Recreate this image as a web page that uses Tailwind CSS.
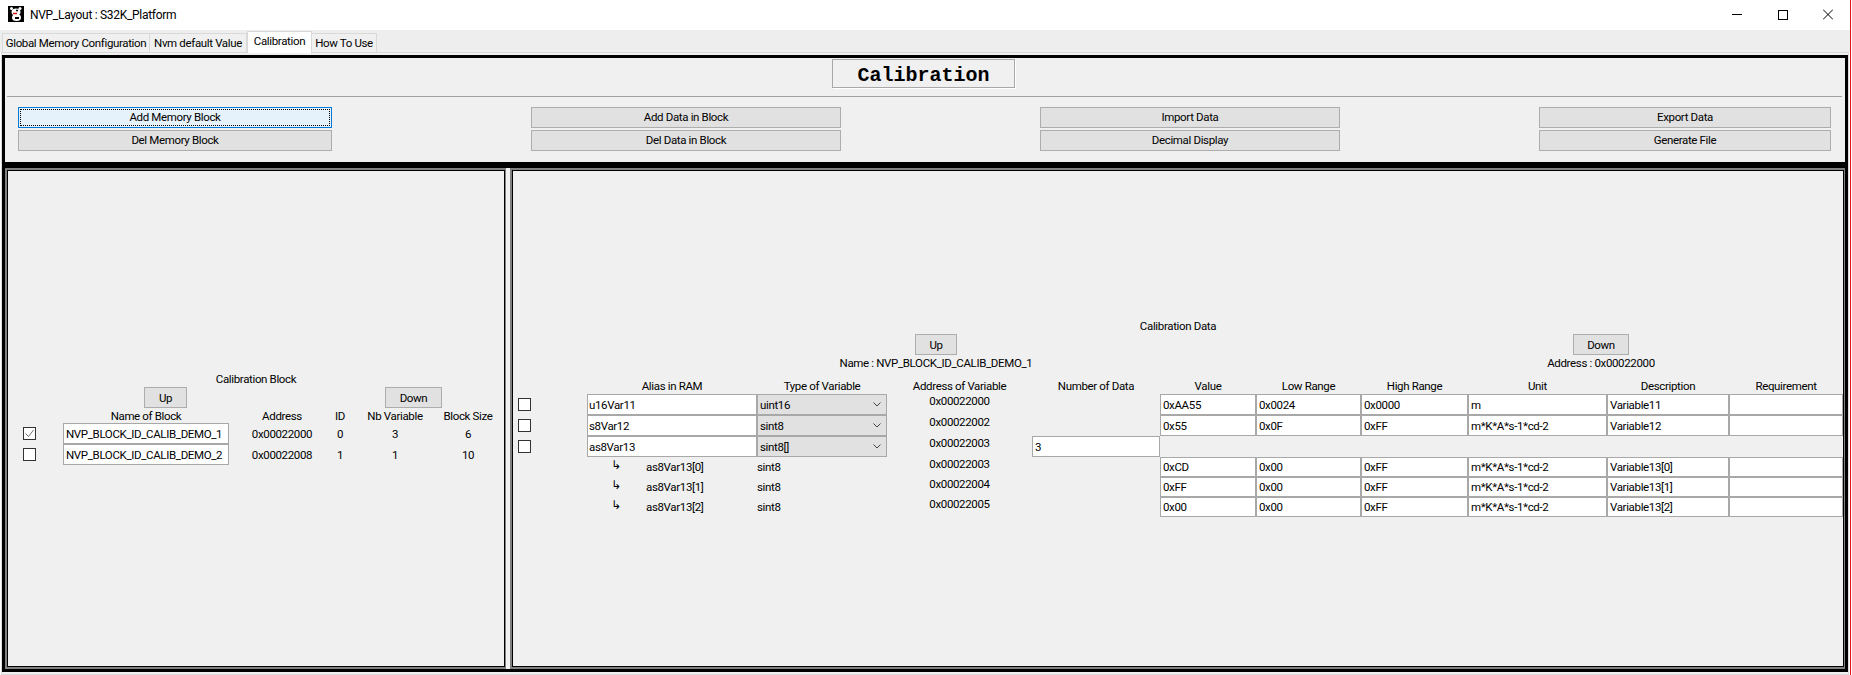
<!DOCTYPE html>
<html lang="en">
<head>
  <meta charset="UTF-8" />
  <title>NVP_Layout : S32K_Platform</title>
  <script src="https://cdn.jsdelivr.net/npm/@tailwindcss/browser@4"></script>
</head>
<body class="bg-white font-['Roboto',sans-serif] text-[11.5px] tracking-[-0.35px] leading-[14px] text-black">
<div class="flex w-[1852px] h-[675px] overflow-hidden">
  <div class="w-[1850px] flex flex-col">

    <!-- Title bar -->
    <div class="h-[30px] flex items-center bg-white">
      <svg class="ml-[8px] -mt-[2px]" width="16" height="16" viewBox="0 0 16 16">
        <rect width="16" height="16" fill="#000"/>
        <circle cx="3.500" cy="2.500" r="1.500" fill="#fff"/>
        <circle cx="12" cy="2.500" r="1.500" fill="#fff"/>
        <ellipse cx="8" cy="6" rx="4.500" ry="3.500" fill="#fff"/>
        <ellipse cx="8.500" cy="11.500" rx="4.500" ry="3.500" fill="#fff"/>
        <path d="M5 7.500h4" stroke="#e01010" stroke-width="1.500" fill="none"/>
        <circle cx="9" cy="4.500" r="1" fill="#000"/>
        <path d="M7 11h4v2H7z" fill="#000"/>
      </svg>
      <span class="ml-[6px] text-[12px] tracking-[-0.3px]">NVP_Layout : S32K_Platform</span>
      <div class="ml-auto pr-[17px] flex items-center gap-[35px] -mt-[2px]">
        <svg width="10" height="11" viewBox="0 0 10 11"><path d="M0 5.500h10" stroke="#000" fill="none"/></svg>
        <svg width="11" height="11" viewBox="0 0 11 11"><rect x="1.500" y="1.500" width="9" height="9" stroke="#000" fill="none"/></svg>
        <svg width="10" height="11" viewBox="0 0 10 11"><path d="M0 .5l10 10M10 .5l-10 10" stroke="#000" fill="none"/></svg>
      </div>
    </div>

    <!-- Tabs -->
    <div class="h-[22px] flex items-end pl-[2px] bg-[#eeeeee] whitespace-nowrap">
      <div class="w-[148px] h-[19px] flex items-center justify-center bg-[#f0f0f0] border border-b-0 border-[#d9d9d9]">Global Memory Configuration</div>
      <div class="w-[97px] h-[19px] flex items-center justify-center bg-[#f0f0f0] border border-l-0 border-b-0 border-[#d9d9d9]">Nvm default Value</div>
      <div class="w-[65px] h-[22px] -mb-px relative z-10 pb-[3px] flex items-center justify-center bg-white border border-b-0 border-[#d9d9d9]">Calibration</div>
      <div class="w-[65px] h-[19px] flex items-center justify-center bg-[#f0f0f0] border border-l-0 border-b-0 border-[#d9d9d9]">How To Use</div>
    </div>

    <!-- Tab pane -->
    <div class="ml-px w-[1848px] flex-1 bg-[#f0f0f0] border border-[#d9d9d9] pt-[2px]">

      <!-- Toolbar frame -->
      <div class="h-[110px] border-[3px] border-black">
        <div class="flex justify-center pr-[3px] pt-px">
          <div class="w-[183px] h-[29px] pt-[5px] flex items-center justify-center border border-[#a8a8a8] shadow-[1px_1px_0_#fff] font-['Liberation_Mono',monospace] font-bold text-[20px] tracking-normal">Calibration</div>
        </div>
        <div class="h-px mt-[8px] ml-[2px] mr-[3px] bg-[#a0a0a0]"></div>
        <div class="flex gap-[199px] pl-[13px] pt-[10px]">
          <div class="w-[314px] flex flex-col gap-[2px]">
            <div class="h-[21px] border border-[#0078d7] bg-[#e5f1fb] p-px">
              <div class="h-full pb-px flex items-center justify-center border border-dotted border-black">Add Memory Block</div>
            </div>
            <div class="h-[21px] pb-px flex items-center justify-center border border-[#adadad] bg-[#e1e1e1]">Del Memory Block</div>
          </div>
          <div class="w-[310px] flex flex-col gap-[2px]">
            <div class="h-[21px] pb-px flex items-center justify-center border border-[#adadad] bg-[#e1e1e1]">Add Data in Block</div>
            <div class="h-[21px] pb-px flex items-center justify-center border border-[#adadad] bg-[#e1e1e1]">Del Data in Block</div>
          </div>
          <div class="w-[300px] flex flex-col gap-[2px]">
            <div class="h-[21px] pb-px flex items-center justify-center border border-[#adadad] bg-[#e1e1e1]">Import Data</div>
            <div class="h-[21px] pb-px flex items-center justify-center border border-[#adadad] bg-[#e1e1e1]">Decimal Display</div>
          </div>
          <div class="w-[292px] flex flex-col gap-[2px]">
            <div class="h-[21px] pb-px flex items-center justify-center border border-[#adadad] bg-[#e1e1e1]">Export Data</div>
            <div class="h-[21px] pb-px flex items-center justify-center border border-[#adadad] bg-[#e1e1e1]">Generate File</div>
          </div>
        </div>
      </div>

      <!-- Lower frame -->
      <div class="h-[507px] border-[3px] border-black flex gap-[4px]">

        <!-- Calibration Block -->
        <div class="w-[501px] border-t-2 border-l-2 border-b-2 border-r border-[#808080]">
          <div class="h-full border border-black flex flex-col justify-center">
            <div class="h-[15px] text-center">Calibration Block</div>
            <div class="grid grid-cols-[55px_166px_106px_10px_100px_46px] grid-rows-[21px_15px_21px_21px]">
              <div></div>
              <div class="col-span-3"><div class="ml-[81px] w-[43px] h-full flex items-center justify-center border border-[#adadad] bg-[#e1e1e1]">Up</div></div>
              <div class="col-span-2"><div class="ml-[40px] w-[57px] h-full flex items-center justify-center border border-[#adadad] bg-[#e1e1e1]">Down</div></div>

              <div></div>
              <div class="flex items-center justify-center">Name of Block</div>
              <div class="flex items-center justify-center">Address</div>
              <div class="flex items-center justify-center">ID</div>
              <div class="flex items-center justify-center">Nb Variable</div>
              <div class="flex items-center justify-center whitespace-nowrap">Block Size</div>

              <div class="flex items-center pl-[15px]">
                <div class="w-[13px] h-[13px] border border-[#333333] bg-white flex items-center justify-center">
                  <svg width="11" height="11" viewBox="0 0 11 11"><path d="M1.500 5.500l3 3 5-6.500" stroke="#707070" fill="none"/></svg>
                </div>
              </div>
              <div class="flex items-center pl-[2px] border border-[#a8a8a8] bg-white whitespace-nowrap">NVP_BLOCK_ID_CALIB_DEMO_1</div>
              <div class="flex items-center justify-center">0x00022000</div>
              <div class="flex items-center justify-center">0</div>
              <div class="flex items-center justify-center">3</div>
              <div class="flex items-center justify-center">6</div>

              <div class="flex items-center pl-[15px]">
                <div class="w-[13px] h-[13px] border border-[#333333] bg-white"></div>
              </div>
              <div class="flex items-center pl-[2px] border border-[#a8a8a8] bg-white whitespace-nowrap">NVP_BLOCK_ID_CALIB_DEMO_2</div>
              <div class="flex items-center justify-center">0x00022008</div>
              <div class="flex items-center justify-center">1</div>
              <div class="flex items-center justify-center">1</div>
              <div class="flex items-center justify-center">10</div>
            </div>
          </div>
        </div>

        <!-- Calibration Data -->
        <div class="w-[1335px] border-t-2 border-l-2 border-b-2 border-r border-[#808080]">
          <div class="h-full border border-black flex flex-col justify-center">
            <div class="h-[14px] leading-[12px] text-center">Calibration Data</div>
            <div class="grid grid-cols-[846px_484px]">
              <div class="flex flex-col items-center">
                <div class="w-[42px] h-[21px] flex items-center justify-center border border-[#adadad] bg-[#e1e1e1]">Up</div>
                <div class="h-[16px] flex items-center">Name : NVP_BLOCK_ID_CALIB_DEMO_1</div>
              </div>
              <div class="flex flex-col items-center">
                <div class="w-[56px] h-[21px] flex items-center justify-center border border-[#adadad] bg-[#e1e1e1]">Down</div>
                <div class="h-[16px] flex items-center">Address : 0x00022000</div>
              </div>
            </div>
            <div class="mt-[8px] grid grid-cols-[74px_170px_130px_145px_128px_96px_105px_107px_139px_122px_114px] grid-rows-[15px_21px_21px_21px_20px_20px_20px]">
              <div></div>
              <div class="text-center">Alias in RAM</div>
              <div class="text-center">Type of Variable</div>
              <div class="text-center">Address of Variable</div>
              <div class="text-center">Number of Data</div>
              <div class="text-center">Value</div>
              <div class="text-center">Low Range</div>
              <div class="text-center">High Range</div>
              <div class="text-center">Unit</div>
              <div class="text-center">Description</div>
              <div class="text-center">Requirement</div>

              <!-- u16Var11 -->
              <div class="flex items-center pl-[5px]"><div class="w-[13px] h-[13px] border border-[#333333] bg-white"></div></div>
              <div class="flex items-center pl-px border border-[#a8a8a8] bg-white">u16Var11</div>
              <div class="flex items-center justify-between pl-[2px] pr-[5px] border border-[#a8a8a8] bg-[#e1e1e1]">uint16<svg width="8" height="5" viewBox="0 0 8 5"><path d="M.5.5L4 4 7.500.5" stroke="#444444" fill="none"/></svg></div>
              <div class="text-center">0x00022000</div>
              <div></div>
              <div class="flex items-center pl-[2px] border border-[#a8a8a8] bg-white">0xAA55</div>
              <div class="flex items-center pl-[2px] border border-[#a8a8a8] bg-white">0x0024</div>
              <div class="flex items-center pl-[2px] border border-[#a8a8a8] bg-white">0x0000</div>
              <div class="flex items-center pl-[2px] border border-[#a8a8a8] bg-white">m</div>
              <div class="flex items-center pl-[2px] border border-[#a8a8a8] bg-white">Variable11</div>
              <div class="border border-[#a8a8a8] bg-white"></div>

              <!-- s8Var12 -->
              <div class="flex items-center pl-[5px]"><div class="w-[13px] h-[13px] border border-[#333333] bg-white"></div></div>
              <div class="flex items-center pl-px border border-[#a8a8a8] bg-white">s8Var12</div>
              <div class="flex items-center justify-between pl-[2px] pr-[5px] border border-[#a8a8a8] bg-[#e1e1e1]">sint8<svg width="8" height="5" viewBox="0 0 8 5"><path d="M.5.5L4 4 7.500.5" stroke="#444444" fill="none"/></svg></div>
              <div class="text-center">0x00022002</div>
              <div></div>
              <div class="flex items-center pl-[2px] border border-[#a8a8a8] bg-white">0x55</div>
              <div class="flex items-center pl-[2px] border border-[#a8a8a8] bg-white">0x0F</div>
              <div class="flex items-center pl-[2px] border border-[#a8a8a8] bg-white">0xFF</div>
              <div class="flex items-center pl-[2px] border border-[#a8a8a8] bg-white">m*K*A*s-1*cd-2</div>
              <div class="flex items-center pl-[2px] border border-[#a8a8a8] bg-white">Variable12</div>
              <div class="border border-[#a8a8a8] bg-white"></div>

              <!-- as8Var13 -->
              <div class="flex items-center pl-[5px]"><div class="w-[13px] h-[13px] border border-[#333333] bg-white"></div></div>
              <div class="flex items-center pl-px border border-[#a8a8a8] bg-white">as8Var13</div>
              <div class="flex items-center justify-between pl-[2px] pr-[5px] border border-[#a8a8a8] bg-[#e1e1e1]">sint8[]<svg width="8" height="5" viewBox="0 0 8 5"><path d="M.5.5L4 4 7.500.5" stroke="#444444" fill="none"/></svg></div>
              <div class="text-center">0x00022003</div>
              <div class="flex items-center pl-[2px] border border-[#a8a8a8] bg-white">3</div>
              <div class="col-span-6"></div>

              <!-- as8Var13[0] -->
              <div></div>
              <div class="flex items-center"><span class="w-[59px] pl-[24px] pb-[5px] font-['DejaVu_Sans',sans-serif] text-[12px]">↳</span>as8Var13[0]</div>
              <div class="flex items-center">sint8</div>
              <div class="text-center">0x00022003</div>
              <div></div>
              <div class="flex items-center pl-[2px] border border-[#a8a8a8] bg-white">0xCD</div>
              <div class="flex items-center pl-[2px] border border-[#a8a8a8] bg-white">0x00</div>
              <div class="flex items-center pl-[2px] border border-[#a8a8a8] bg-white">0xFF</div>
              <div class="flex items-center pl-[2px] border border-[#a8a8a8] bg-white">m*K*A*s-1*cd-2</div>
              <div class="flex items-center pl-[2px] border border-[#a8a8a8] bg-white">Variable13[0]</div>
              <div class="border border-[#a8a8a8] bg-white"></div>

              <!-- as8Var13[1] -->
              <div></div>
              <div class="flex items-center"><span class="w-[59px] pl-[24px] pb-[5px] font-['DejaVu_Sans',sans-serif] text-[12px]">↳</span>as8Var13[1]</div>
              <div class="flex items-center">sint8</div>
              <div class="text-center">0x00022004</div>
              <div></div>
              <div class="flex items-center pl-[2px] border border-[#a8a8a8] bg-white">0xFF</div>
              <div class="flex items-center pl-[2px] border border-[#a8a8a8] bg-white">0x00</div>
              <div class="flex items-center pl-[2px] border border-[#a8a8a8] bg-white">0xFF</div>
              <div class="flex items-center pl-[2px] border border-[#a8a8a8] bg-white">m*K*A*s-1*cd-2</div>
              <div class="flex items-center pl-[2px] border border-[#a8a8a8] bg-white">Variable13[1]</div>
              <div class="border border-[#a8a8a8] bg-white"></div>

              <!-- as8Var13[2] -->
              <div></div>
              <div class="flex items-center"><span class="w-[59px] pl-[24px] pb-[5px] font-['DejaVu_Sans',sans-serif] text-[12px]">↳</span>as8Var13[2]</div>
              <div class="flex items-center">sint8</div>
              <div class="text-center">0x00022005</div>
              <div></div>
              <div class="flex items-center pl-[2px] border border-[#a8a8a8] bg-white">0x00</div>
              <div class="flex items-center pl-[2px] border border-[#a8a8a8] bg-white">0x00</div>
              <div class="flex items-center pl-[2px] border border-[#a8a8a8] bg-white">0xFF</div>
              <div class="flex items-center pl-[2px] border border-[#a8a8a8] bg-white">m*K*A*s-1*cd-2</div>
              <div class="flex items-center pl-[2px] border border-[#a8a8a8] bg-white">Variable13[2]</div>
              <div class="border border-[#a8a8a8] bg-white"></div>
            </div>
          </div>
        </div>
      </div>
    </div>
  </div>
  <!-- Window edge -->
  <div class="w-px h-full bg-[#e81123]"></div>
  <div class="w-px h-full bg-white"></div>
</div>
</body>
</html>
